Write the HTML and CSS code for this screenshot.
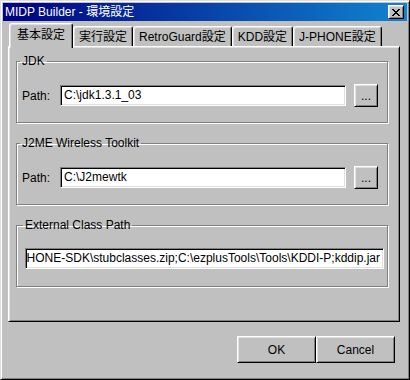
FILE: index.html
```html
<!DOCTYPE html>
<html lang="ja">
<head>
    <meta charset="UTF-8">
    <title>MIDP Builder - 環境設定</title>
    <link rel="stylesheet" href="styles.css">
</head>
<body>
    <div class="window">
        <div class="titlebar">
            <span class="title">MIDP Builder - 環境設定</span>
            <button class="close_button" title="閉じる">
                <svg width="8" height="7" viewBox="0 0 8 7" shape-rendering="crispEdges">
                    <path fill="#000" d="M0 0h2v1h-2z M6 0h2v1h-2z M1 1h2v1h-2z M5 1h2v1h-2z M2 2h4v1h-4z M3 3h2v1h-2z M2 4h4v1h-4z M1 5h2v1h-2z M5 5h2v1h-2z M0 6h2v1h-2z M6 6h2v1h-2z"/>
                </svg>
            </button>
        </div>
        <div class="content">
            <div class="tabs">
                <div class="tab active">基本設定</div>
                <div class="tab">実行設定</div>
                <div class="tab">RetroGuard設定</div>
                <div class="tab">KDD設定</div>
                <div class="tab">J-PHONE設定</div>
            </div>
            <div class="panel">
                <fieldset class="group">
                    <legend>JDK</legend>
                    <div class="field_row">
                        <span class="field_label">Path:</span>
                        <div class="textbox">C:\jdk1.3.1_03</div>
                        <button class="btn browse_button">...</button>
                    </div>
                </fieldset>
                <fieldset class="group">
                    <legend>J2ME Wireless Toolkit</legend>
                    <div class="field_row">
                        <span class="field_label">Path:</span>
                        <div class="textbox">C:\J2mewtk</div>
                        <button class="btn browse_button">...</button>
                    </div>
                </fieldset>
                <fieldset class="group classpath_group">
                    <legend>External Class Path</legend>
                    <div class="textbox scrolled"><span>C:\J-PHONE\J-PHONE-SDK\stubclasses.zip;C:\ezplusTools\Tools\KDDI-P;kddip.jar</span></div>
                </fieldset>
            </div>
            <div class="actions">
                <button class="btn action_button">OK</button>
                <button class="btn action_button">Cancel</button>
            </div>
        </div>
    </div>
</body>
</html>
```
FILE: styles.css
```css
body {
    margin: 0;
    padding: 0;
    background-color: #c0c0c0;
    font-family: "Liberation Sans", "Noto Sans CJK JP", sans-serif;
    font-size: 12px;
    color: #000;
}
button {
    font: inherit;
    color: #000;
    margin: 0;
    padding: 0;
}
.window {
    box-sizing: border-box;
    width: 410px;
    height: 380px;
    padding: 2px;
    background-color: #c0c0c0;
    border: 1px solid;
    border-color: #dfdfdf #000 #000 #dfdfdf;
    box-shadow: inset 1px 1px 0 #fff, inset -1px -1px 0 #808080;
    display: flex;
    flex-direction: column;
}
.titlebar {
    height: 18px;
    display: flex;
    align-items: center;
    justify-content: space-between;
    padding: 0 3px 0 2px;
    background: linear-gradient(to right, #000080, #1084d0);
    color: #fff;
}
.title {
    line-height: 18px;
    white-space: nowrap;
}
.close_button {
    box-sizing: border-box;
    width: 16px;
    height: 14px;
    display: flex;
    align-items: center;
    justify-content: center;
    background-color: #c0c0c0;
    border: 1px solid;
    border-color: #fff #000 #000 #fff;
    box-shadow: inset 1px 1px 0 #dfdfdf, inset -1px -1px 0 #808080;
}
.content {
    flex: 1;
    display: flex;
    flex-direction: column;
    padding: 2px 7px 0 5px;
}
.tabs {
    height: 23px;
    display: flex;
    align-items: flex-end;
    padding-left: 1px;
}
.tab {
    box-sizing: border-box;
    height: 20px;
    padding: 1px 5px 0;
    line-height: 18px;
    white-space: nowrap;
    border: 1px solid;
    border-bottom: none;
    border-color: #fff #000 #000 #fff;
    border-radius: 3px 3px 0 0;
    box-shadow: inset 1px 1px 0 #dfdfdf, inset -1px 0 0 #808080;
}
.tab.active {
    height: 25px;
    margin-bottom: -2px;
    padding: 0 7px;
    line-height: 22px;
    position: relative;
    z-index: 1;
    background-color: #c0c0c0;
}
.panel {
    box-sizing: border-box;
    height: 276px;
    padding-top: 8px;
    border: 1px solid;
    border-color: #fff #000 #000 #fff;
    box-shadow: inset 1px 1px 0 #dfdfdf, inset -1px -1px 0 #808080;
}
.group {
    min-width: 0;
    margin: 0 11px 14px 7px;
    padding: 16px 9px 15px 5px;
    border: 1px solid #808080;
    box-shadow: 1px 1px 0 #fff, inset 1px 1px 0 #fff;
}
.group legend {
    margin-left: -2px;
    padding: 0 2px;
    line-height: 13px;
}
.classpath_group {
    padding: 16px 3px 17px 8px;
}
.field_row {
    height: 23px;
    display: flex;
    align-items: center;
}
.field_label {
    margin-right: 10px;
}
.textbox {
    box-sizing: border-box;
    flex: 1;
    height: 21px;
    padding: 0 3px;
    line-height: 19px;
    background-color: #fff;
    white-space: nowrap;
    overflow: hidden;
    border: 1px solid;
    border-color: #808080 #fff #fff #808080;
    box-shadow: inset 1px 1px 0 #000, inset -1px -1px 0 #dfdfdf;
}
.textbox.scrolled {
    display: flex;
    justify-content: flex-end;
}
.textbox.scrolled span {
    flex: none;
}
.btn {
    box-sizing: border-box;
    background-color: #c0c0c0;
    border: 1px solid;
    border-color: #fff #000 #000 #fff;
    box-shadow: inset 1px 1px 0 #dfdfdf, inset -1px -1px 0 #808080;
    cursor: pointer;
}
.browse_button {
    width: 24px;
    height: 23px;
    margin-left: 8px;
    line-height: 18px;
}
.actions {
    display: flex;
    justify-content: flex-end;
    margin: 14px 5px 0 0;
}
.action_button {
    width: 79px;
    height: 27px;
}
```
